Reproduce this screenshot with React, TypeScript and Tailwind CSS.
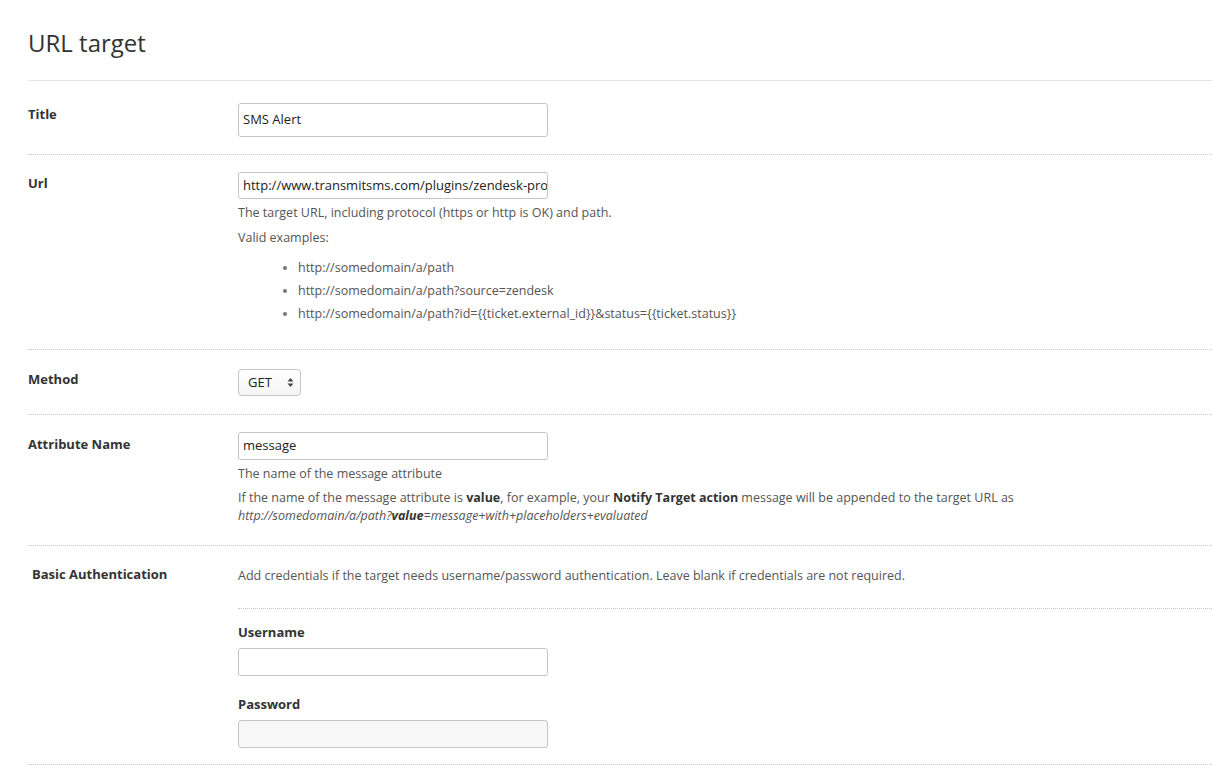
import React from 'react';

const FONT = "font-['Open_Sans','Liberation_Sans',sans-serif]";

function Row({
  label,
  children,
  className = '',
  labelClassName = '',
}: {
  label: string;
  children: React.ReactNode;
  className?: string;
  labelClassName?: string;
}) {
  return (
    <div className={`flex border-b border-dotted border-[#c8c8c8] ${className}`}>
      <div className={`w-[210px] shrink-0 text-[13px] font-bold text-[#333] ${labelClassName}`}>
        {label}
      </div>
      <div className="min-w-0 flex-1">{children}</div>
    </div>
  );
}

function TextInput({ value, className = '' }: { value?: string; className?: string }) {
  return (
    <div
      className={`flex w-[310px] items-center overflow-hidden whitespace-nowrap rounded-[3px] border border-[#c4c4c4] pl-[4px] text-[13px] text-[#222] ${className}`}
    >
      {value}
    </div>
  );
}

function MethodSelect() {
  return (
    <div className="flex h-[27px] w-[63px] items-center justify-between rounded-[4px] border border-[#c6c6c6] bg-gradient-to-b from-white to-[#f4f4f4] pl-[9px] pr-[6px] text-[13px] text-[#222]">
      <span>GET</span>
      <svg width="7" height="11" viewBox="0 0 7 11">
        <path d="M3.5 1 L6.5 4.5 H0.5 Z" fill="#444" />
        <path d="M3.5 10 L6.5 6.5 H0.5 Z" fill="#444" />
      </svg>
    </div>
  );
}

export default function App() {
  const examples = [
    'http://somedomain/a/path',
    'http://somedomain/a/path?source=zendesk',
    'http://somedomain/a/path?id={{ticket.external_id}}&status={{ticket.status}}',
  ];

  return (
    <div className={`${FONT} min-h-[768px] bg-white pl-[28px] text-[#555]`}>
      <h1 className="pt-[27px] pb-[22px] text-[24px] leading-[31px] text-[#333]">URL target</h1>

      <div className="border-b border-[#e6e6e6]" />

      {/* Title */}
      <Row label="Title" className="pt-[22px] pb-[17px]" labelClassName="pt-[2px]">
        <TextInput value="SMS Alert" className="h-[34px]" />
      </Row>

      {/* Url */}
      <Row label="Url" className="pt-[17px] pb-[24px]" labelClassName="pt-[2px]">
        <TextInput
          value="http://www.transmitsms.com/plugins/zendesk-process"
          className="h-[27px]"
        />
        <p className="mt-[5px] text-[12.5px] leading-[18px]">
          The target URL, including protocol (https or http is OK) and path.
        </p>
        <p className="mt-[7px] text-[12.5px] leading-[18px]">Valid examples:</p>
        <ul className="mt-[9px] list-disc pl-[60px] text-[12.5px] leading-[23px] marker:text-[#777]">
          {examples.map((e) => (
            <li key={e}>{e}</li>
          ))}
        </ul>
      </Row>

      {/* Method */}
      <Row label="Method" className="pt-[19px] pb-[18px]" labelClassName="pt-[1px]">
        <MethodSelect />
      </Row>

      {/* Attribute Name */}
      <Row label="Attribute Name" className="pt-[17px] pb-[20px]" labelClassName="pt-[3px]">
        <TextInput value="message" className="h-[28px]" />
        <p className="mt-[5px] text-[12.5px] leading-[18px]">The name of the message attribute</p>
        <p className="mt-[6px] text-[12.5px] leading-[18px]">
          If the name of the message attribute is <b className="text-[#333]">value</b>, for example,
          your <b className="text-[#333]">Notify Target action</b> message will be appended to the
          target URL as
          <br />
          <i>
            http://somedomain/a/path?<b className="text-[#333]">value</b>
            =message+with+placeholders+evaluated
          </i>
        </p>
      </Row>

      {/* Basic Authentication */}
      <div className="flex border-b border-dotted border-[#c8c8c8] pb-[16px]">
        <div className="w-[210px] shrink-0 pt-[19px] pl-[4px] text-[13px] font-bold text-[#333]">
          Basic Authentication
        </div>
        <div className="min-w-0 flex-1">
          <p className="border-b border-dotted border-[#c8c8c8] pt-[21px] pb-[23px] text-[12.5px] leading-[18px]">
            Add credentials if the target needs username/password authentication. Leave blank if
            credentials are not required.
          </p>
          <div className="pt-[14px] text-[13px] font-bold leading-[18px] text-[#333]">Username</div>
          <TextInput className="mt-[7px] h-[28px]" />
          <div className="mt-[19px] text-[13px] font-bold leading-[18px] text-[#333]">Password</div>
          <TextInput className="mt-[7px] h-[28px] bg-[#f8f8f8]" />
        </div>
      </div>
    </div>
  );
}
